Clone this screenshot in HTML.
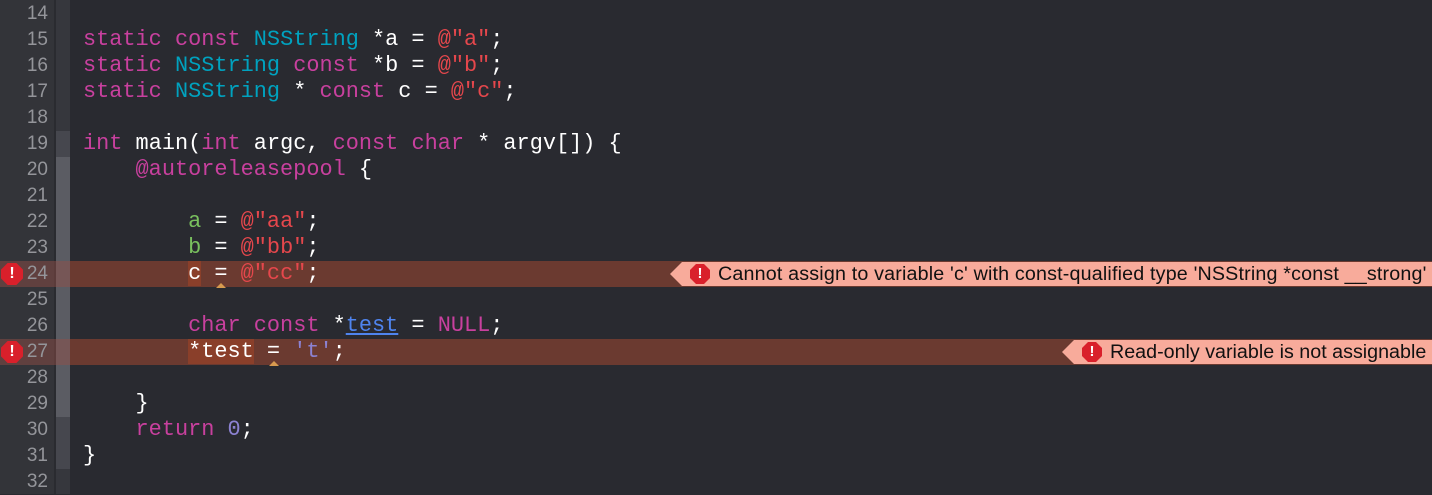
<!DOCTYPE html>
<html><head><style>
body{margin:0;width:1432px;height:494px;background:#292a30;overflow:hidden;position:relative;font-family:"Liberation Mono",monospace}
.g{position:absolute;left:0;top:0;width:54px;height:494px;background:#333439}
.sep{position:absolute;left:54px;top:0;width:2px;height:494px;background:#2a2b30}
.strip{position:absolute;left:56px;top:0;width:14px;height:494px;background:#36373d}
.ln{position:absolute;left:0;width:48px;text-align:right;font-family:"Liberation Sans",sans-serif;font-size:19px;color:#94959a;line-height:26px;height:26px}
.l{position:absolute;left:83px;font-size:21.9px;line-height:26px;height:26px;white-space:pre;color:#fff}
.err{position:absolute;left:0;width:1432px;height:26px;background:#6b3a30}
.k{color:#c8409e}.t{color:#00a2bf}.s{color:#e5474c}.v{color:#79c05e}.n{color:#8c82d2}.u{color:#4f84ee;text-decoration:underline}
.hl{background:#8a3f2a}
.bub{position:absolute;height:24px;background:#f8ab9b;font-family:"Liberation Sans",sans-serif;font-size:19.7px;color:#111;line-height:24px;white-space:nowrap}
.bub:before{content:"";position:absolute;left:-12px;top:0;border-right:12px solid #f8ab9b;border-top:12px solid transparent;border-bottom:12px solid transparent}
.ic{display:inline-block;width:20px;height:20px;background:#d9202b;color:#fff;font-weight:bold;text-align:center;line-height:20px;font-size:15px;clip-path:polygon(30% 0,70% 0,100% 30%,100% 70%,70% 100%,30% 100%,0 70%,0 30%);font-family:"Liberation Sans",sans-serif}
.bub .ic{position:absolute;left:8px;top:2px}
.bub span.tx{position:absolute;left:36px;top:0}
.gi{position:absolute;left:1px;width:22px;height:22px;line-height:22px;font-size:16px}
.car{position:absolute;width:0;height:0;border-left:5px solid transparent;border-right:5px solid transparent;border-bottom:5px solid #d79a4f}
</style></head><body>
<div class="err" style="top:261px"></div>
<div class="err" style="top:339px"></div>
<div class="g"></div><div class="sep"></div><div class="strip"></div>
<div style="position:absolute;left:56px;top:131px;width:14px;height:338px;background:#46474e"></div>
<div style="position:absolute;left:56px;top:157px;width:14px;height:260px;background:#5b5c63"></div>
<div style="position:absolute;left:0;top:261px;width:70px;height:26px;background:rgba(150,80,70,.45)"></div>
<div style="position:absolute;left:0;top:339px;width:70px;height:26px;background:rgba(150,80,70,.45)"></div>
<div class="ln" style="top:1px">14</div><div class="ln" style="top:27px">15</div><div class="ln" style="top:53px">16</div><div class="ln" style="top:79px">17</div><div class="ln" style="top:105px">18</div><div class="ln" style="top:131px">19</div><div class="ln" style="top:157px">20</div><div class="ln" style="top:183px">21</div><div class="ln" style="top:209px">22</div><div class="ln" style="top:235px">23</div><div class="ln" style="top:261px">24</div><div class="ln" style="top:287px">25</div><div class="ln" style="top:313px">26</div><div class="ln" style="top:339px">27</div><div class="ln" style="top:365px">28</div><div class="ln" style="top:391px">29</div><div class="ln" style="top:417px">30</div><div class="ln" style="top:443px">31</div><div class="ln" style="top:469px">32</div>
<span class="ic gi" style="top:263px">!</span><span class="ic gi" style="top:341px">!</span>
<div class="l" style="top:27px"><span class="k">static</span> <span class="k">const</span> <span class="t">NSString</span> *a = <span class="s">@"a"</span>;</div>
<div class="l" style="top:53px"><span class="k">static</span> <span class="t">NSString</span> <span class="k">const</span> *b = <span class="s">@"b"</span>;</div>
<div class="l" style="top:79px"><span class="k">static</span> <span class="t">NSString</span> * <span class="k">const</span> c = <span class="s">@"c"</span>;</div>
<div class="l" style="top:131px"><span class="k">int</span> main(<span class="k">int</span> argc, <span class="k">const</span> <span class="k">char</span> * argv[]) {</div>
<div class="l" style="top:157px">    <span class="k">@autoreleasepool</span> {</div>
<div class="l" style="top:209px">        <span class="v">a</span> = <span class="s">@"aa"</span>;</div>
<div class="l" style="top:235px">        <span class="v">b</span> = <span class="s">@"bb"</span>;</div>
<div class="l" style="top:261px">        <span class="hl">c</span> = <span class="s">@"cc"</span>;</div>
<div class="l" style="top:313px">        <span class="k">char</span> <span class="k">const</span> *<span class="u">test</span> = <span class="k">NULL</span>;</div>
<div class="l" style="top:339px">        <span class="hl">*test</span> = <span class="n">'t'</span>;</div>
<div class="l" style="top:391px">    }</div>
<div class="l" style="top:417px">    <span class="k">return</span> <span class="n">0</span>;</div>
<div class="l" style="top:443px">}</div>
<div class="car" style="left:216px;top:283px"></div>
<div class="car" style="left:269px;top:361px"></div>
<div class="bub" style="left:682px;top:262px;width:750px"><span class="ic">!</span><span class="tx" style="letter-spacing:0.17px">Cannot assign to variable 'c' with const-qualified type 'NSString *const __strong'</span></div>
<div class="bub" style="left:1074px;top:340px;width:358px"><span class="ic">!</span><span class="tx">Read-only variable is not assignable</span></div>
</body></html>
